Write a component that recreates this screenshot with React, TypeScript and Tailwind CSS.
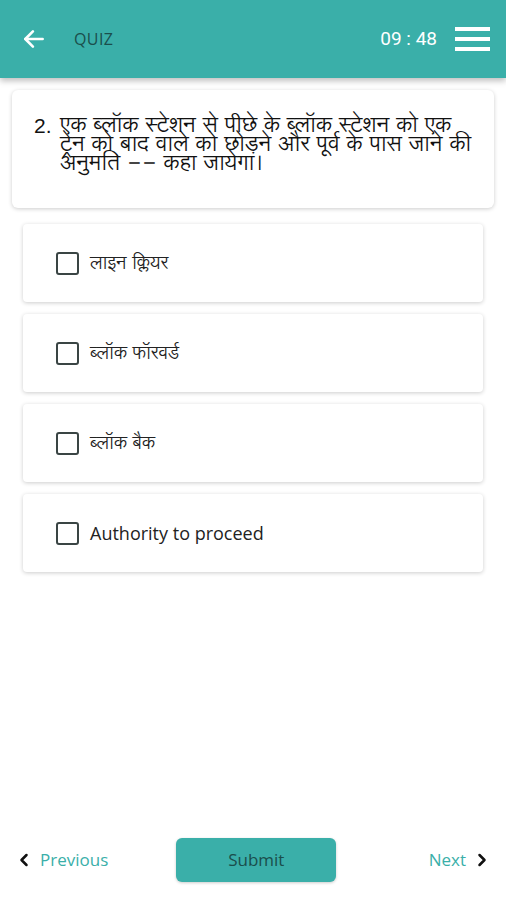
import { ChevronLeft, ChevronRight } from "lucide-react";

const HINDI = "font-['Lohit_Devanagari','Noto_Sans_Devanagari','FreeSans','Noto_Sans',sans-serif]";

const options = ["लाइन क्लियर", "ब्लॉक फॉरवर्ड", "ब्लॉक बैक", "Authority to proceed"];

export default function App() {
  return (
    <div className="flex h-[900px] w-[506px] flex-col bg-white font-['Open_Sans',sans-serif]">
      {/* header */}
      <header className="flex h-[78px] shrink-0 items-center bg-[#3aafa9] pl-[21px] pr-[16px] shadow-[0_3px_6px_rgba(0,0,0,0.25)]">
        <svg width="26" height="26" viewBox="0 0 24 24" fill="none" stroke="white" strokeWidth="2.4" strokeLinecap="round" strokeLinejoin="round">
          <path d="M20 12H4" />
          <path d="M11 5l-7 7 7 7" />
        </svg>
        <span className="ml-[27px] text-[16px] tracking-wide text-[#1a4e4c]">QUIZ</span>
        <span className="ml-auto font-['Roboto',sans-serif] text-[19px] text-white">09 : 48</span>
        <div className="ml-[18px] flex w-[35px] flex-col gap-[6px]">
          <div className="h-[4px] bg-white" />
          <div className="h-[4px] bg-white" />
          <div className="h-[4px] bg-white" />
        </div>
      </header>

      {/* question */}
      <div className="mx-[12px] mt-[12px] flex rounded-[6px] bg-white pb-[35px] pl-[22px] pr-[20px] pt-[26px] shadow-[0_1px_4px_rgba(0,0,0,0.2)]">
        <span className="w-[26px] shrink-0 font-['Liberation_Sans',sans-serif] text-[21px] leading-[19px] text-[#111]">2.</span>
        <p className={`${HINDI} text-[22px] leading-[19px] text-[#111]`}>
          एक ब्लॉक स्टेशन से पीछे के ब्लॉक स्टेशन को एक ट्रेन को बाद वाले को छोड़ने और पूर्व के पास जाने की अनुमति -- कहा जायेगा।
        </p>
      </div>

      {/* options */}
      <div className="mx-[23px] mt-[16px] flex flex-col gap-[12px]">
        {options.map((o) => (
          <label key={o} className="flex h-[78px] items-center rounded-[4px] bg-white pl-[33px] shadow-[0_1px_4px_rgba(0,0,0,0.2)]">
            <span className="h-[23px] w-[23px] shrink-0 rounded-[3px] border-[2.5px] border-[#3a4544]" />
            <span className={`ml-[11px] text-[#222] ${/[a-z]/i.test(o) ? "text-[18px]" : `${HINDI} text-[18px]`}`}>{o}</span>
          </label>
        ))}
      </div>

      {/* footer */}
      <div className="mb-[18px] mt-auto flex items-center px-[14px]">
        <div className="flex items-center gap-[6px]">
          <ChevronLeft size={20} strokeWidth={3} className="text-[#111]" />
          <span className="text-[17px] text-[#3aafa9]">Previous</span>
        </div>
        <button className="ml-[68px] h-[44px] w-[160px] rounded-[6px] bg-[#3aafa9] text-[17px] text-[#1a4e4c] shadow-[0_1px_3px_rgba(0,0,0,0.2)]">
          Submit
        </button>
        <div className="ml-auto flex items-center gap-[6px]">
          <span className="text-[17px] text-[#3aafa9]">Next</span>
          <ChevronRight size={20} strokeWidth={3} className="text-[#111]" />
        </div>
      </div>
    </div>
  );
}
